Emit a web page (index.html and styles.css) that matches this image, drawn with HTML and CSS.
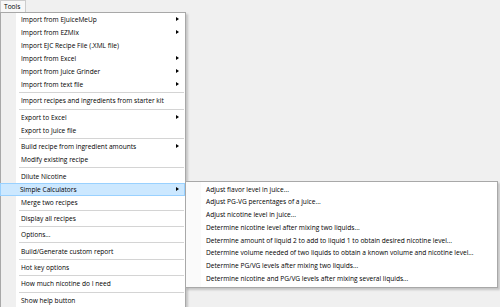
FILE: index.html
```html
<!DOCTYPE html>
<html lang="en">
<head>
  <meta charset="UTF-8">
  <title>Tools menu</title>
  <link rel="stylesheet" href="styles.css">
</head>
<body>
  <div class="menubar">
    <div class="menubar-item open">Tools</div>
  </div>

  <ul class="menu main-menu">
    <li class="item has-sub">Import from EJuiceMeUp</li>
    <li class="item has-sub">Import from EZMix</li>
    <li class="item">Import EJC Recipe File (.XML file)</li>
    <li class="item has-sub">Import from Excel</li>
    <li class="item has-sub">Import from Juice Grinder</li>
    <li class="item has-sub">Import from text file</li>
    <li class="sep"></li>
    <li class="item">Import recipes and ingredients from starter kit</li>
    <li class="sep"></li>
    <li class="item has-sub">Export to Excel</li>
    <li class="item">Export to Juice file</li>
    <li class="sep"></li>
    <li class="item has-sub">Build recipe from ingredient amounts</li>
    <li class="item">Modify existing recipe</li>
    <li class="sep"></li>
    <li class="item">Dilute Nicotine</li>
    <li class="item has-sub active">
      Simple Calculators
      <ul class="menu sub-menu">
        <li class="item">Adjust flavor level in juice...</li>
        <li class="item">Adjust PG-VG percentages of a juice...</li>
        <li class="item">Adjust nicotine level in juice...</li>
        <li class="item">Determine nicotine level after mixing two liquids...</li>
        <li class="item">Determine amount of liquid 2 to add to liquid 1 to obtain desired nicotine level...</li>
        <li class="item">Determine volume needed of two liquids to obtain a known volume and nicotine level...</li>
        <li class="item">Determine PG/VG levels after mixing two liquids...</li>
        <li class="item">Determine nicotine and PG/VG levels after mixing several liquids...</li>
      </ul>
    </li>
    <li class="item">Merge two recipes</li>
    <li class="sep"></li>
    <li class="item">Display all recipes</li>
    <li class="sep"></li>
    <li class="item">Options...</li>
    <li class="sep"></li>
    <li class="item">Build/Generate custom report</li>
    <li class="sep"></li>
    <li class="item">Hot key options</li>
    <li class="sep"></li>
    <li class="item">How much nicotine do I need</li>
    <li class="sep"></li>
    <li class="item">Show help button</li>
  </ul>
</body>
</html>
```

FILE: styles.css
```css
* {
  margin: 0;
  padding: 0;
  box-sizing: border-box;
}

body {
  width: 500px;
  height: 307px;
  overflow: hidden;
  background-color: #f0f0f0;
  font-family: "Open Sans", "Liberation Sans", sans-serif;
  font-size: 6.6px;
  color: #000;
}

/* Menu bar */
.menubar {
  display: flex;
  height: 12px;
}

.menubar-item {
  padding: 0 5px 0 3px;
  line-height: 11px;
  border: 1px solid #cccccc;
  border-bottom: none;
  background-color: #f7f7f7;
}

/* Drop-down menus */
.menu {
  list-style: none;
  border: 1px solid #a8a8a8;
  background: linear-gradient(to right, #f0f0f0 15px, #ffffff 15px);
  box-shadow: 2px 2px 2px rgba(0, 0, 0, 0.18);
}

.main-menu {
  width: 186px;
}

.item {
  position: relative;
  height: 13px;
  line-height: 13px;
  padding-left: 20px;
  white-space: nowrap;
}

.item.has-sub::after {
  content: "";
  position: absolute;
  right: 6px;
  top: 4px;
  border-left: 3px solid #000;
  border-top: 2.5px solid transparent;
  border-bottom: 2.5px solid transparent;
}

.item.active {
  background-color: #cce8ff;
  border: 1px solid #99d1ff;
  line-height: 11px;
  padding-left: 19px;
  margin-left: -1px;
}

.item.active::after {
  right: 5px;
  top: 3px;
}

.sep {
  height: 1px;
  margin: 1.2px 1px 1.2px 18px;
  background-color: #d4d4d4;
}

/* Sub menu, opened to the right of the highlighted item */
.sub-menu {
  position: absolute;
  left: 184px;
  top: -3px;
  width: 313px;
  padding: 2px 0 1px;
  background: linear-gradient(to right, #fafafa 15px, #ffffff 15px);
}

.sub-menu .item {
  height: 12.8px;
  line-height: 12.8px;
}
```
